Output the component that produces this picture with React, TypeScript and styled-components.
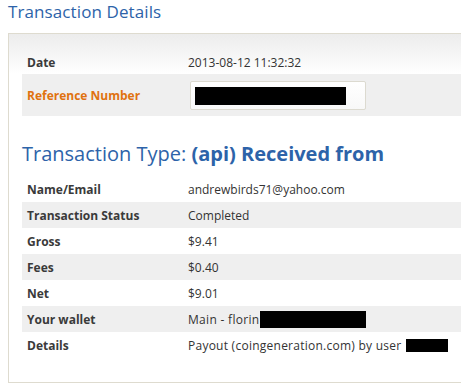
import React from 'react'
import styled, { createGlobalStyle } from 'styled-components'

const GlobalStyle = createGlobalStyle`
  body {
    margin: 0;
    background: #fff;
    overflow: hidden;
    font-family: 'Open Sans', 'Liberation Sans', sans-serif;
    color: #333;
  }
`

const Page = styled.div`
  padding: 0 0 0 8px;
`

const Title = styled.h1`
  margin: 0;
  height: 33px;
  font-size: 17px;
  font-weight: 400;
  line-height: 24px;
  color: #2d63a9;
  letter-spacing: 0.1px;
`

const Panel = styled.div`
  height: 350px;
  box-sizing: border-box;
  border: 1px solid #dedbcf;
  border-right: none;
  background: linear-gradient(#ececec 0, #ffffff 40px);
  padding: 16px 0 0 13px;
`

const Row = styled.div<{ $shaded?: boolean; $tall?: boolean }>`
  display: flex;
  align-items: center;
  height: ${p => (p.$tall ? 42 : 26)}px;
  background: ${p => (p.$shaded ? '#efefef' : 'transparent')};
  font-size: 12px;
`

const DateRow = styled(Row)`
  height: 24px;
`

const Label = styled.div<{ $accent?: boolean }>`
  width: 161px;
  padding-left: 5px;
  font-weight: 700;
  color: ${p => (p.$accent ? '#e0720f' : '#3a3a3a')};
`

const Value = styled.div<{ $tracking?: number }>`
  display: flex;
  align-items: center;
  color: #333;
  letter-spacing: ${p => p.$tracking ?? 0}px;
`

const InputBox = styled.div`
  width: 176px;
  height: 29px;
  margin-left: 2px;
  box-sizing: border-box;
  border: 1px solid #dcdad0;
  border-radius: 2px;
  background: linear-gradient(#ffffff, #f8f8f8);
  padding: 5px 0 0 3px;
`

const Redact = styled.span<{ $w: number; $h: number }>`
  display: inline-block;
  width: ${p => p.$w}px;
  height: ${p => p.$h}px;
  margin-left: 1px;
  background: #000;
`

const Heading = styled.h2`
  margin: 0;
  height: 60px;
  box-sizing: border-box;
  padding-top: 24px;
  font-size: 20px;
  font-weight: 400;
  line-height: 28px;
  color: #2d63a9;

  b {
    font-weight: 700;
  }
`

const details = [
  { label: 'Name/Email', value: 'andrewbirds71@yahoo.com' },
  { label: 'Transaction Status', value: 'Completed' },
  { label: 'Gross', value: '$9.41' },
  { label: 'Fees', value: '$0.40' },
  { label: 'Net', value: '$9.01' },
]

export default function App() {
  return (
    <>
      <GlobalStyle />
      <Page>
        <Title>Transaction Details</Title>
        <Panel>
          <DateRow>
            <Label>Date</Label>
            <Value>2013-08-12 11:32:32</Value>
          </DateRow>
          <Row $shaded $tall>
            <Label $accent>Reference Number</Label>
            <InputBox>
              <Redact $w={151} $h={18} />
            </InputBox>
          </Row>
          <Heading>
            Transaction Type: <b>(api) Received from</b>
          </Heading>
          {details.map((d, i) => (
            <Row key={d.label} $shaded={i % 2 === 1}>
              <Label>{d.label}</Label>
              <Value>{d.value}</Value>
            </Row>
          ))}
          <Row $shaded>
            <Label>Your wallet</Label>
            <Value $tracking={0.3}>
              Main - florin
              <Redact $w={106} $h={17} />
            </Value>
          </Row>
          <Row>
            <Label>Details</Label>
            <Value $tracking={0.25}>
              Payout (coingeneration.com) by user&nbsp;
              <Redact $w={42} $h={13} />
            </Value>
          </Row>
        </Panel>
      </Page>
    </>
  )
}
